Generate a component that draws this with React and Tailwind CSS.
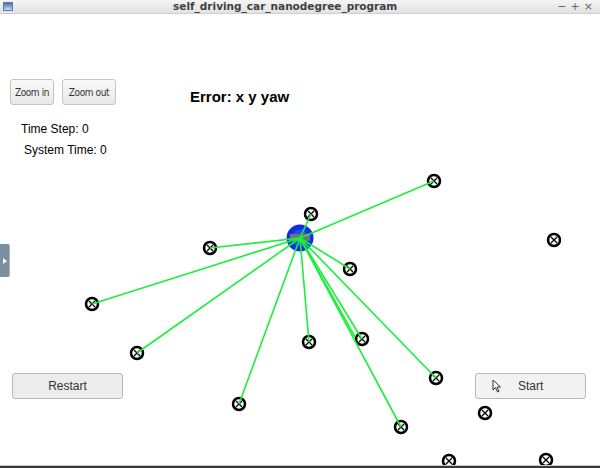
import React from 'react'

const CAR = { x: 300, y: 238 }

// landmark positions, and whether the car currently sees them
const LANDMARKS = [
  [434, 181, true], [311, 214, true], [210, 248, true], [350, 269, true],
  [554, 240, false], [92, 304, true], [137, 353, true], [309, 342, true],
  [362, 339, true], [436, 378, true], [239, 404, true], [401, 427, true],
  [485, 413, false], [449, 461, false], [546, 460, false],
]

function Landmark({ x, y }) {
  return (
    <g>
      <circle cx={x} cy={y} r={6} fill="white" stroke="black" strokeWidth={2.5} />
      <path d={`M${x - 3} ${y - 3}L${x + 3} ${y + 3}M${x + 3} ${y - 3}L${x - 3} ${y + 3}`} stroke="black" strokeWidth={1.3} />
    </g>
  )
}

function Scene() {
  return (
    <svg className="absolute inset-0" width="600" height="454" viewBox="0 14 600 454">
      {LANDMARKS.map(([x, y], i) => <Landmark key={i} x={x} y={y} />)}
      <circle cx={CAR.x} cy={CAR.y} r={13.5} fill="#0d2fe6" />
      <circle cx={CAR.x} cy={CAR.y} r={8.5} fill="#1f4cf0" />
      <rect x={290} y={234} width={20} height={7} fill="#6f747c" />
      {LANDMARKS.filter(l => l[2]).map(([x, y], i) => (
        <line key={i} x1={CAR.x} y1={CAR.y} x2={x} y2={y} stroke="#1bef3a" strokeWidth={1.6} />
      ))}
      <line x1={CAR.x} y1={CAR.y} x2={355} y2={337} stroke="#1bef3a" strokeWidth={1.6} />
    </svg>
  )
}

export default function App() {
  return (
    <div className="w-[600px] h-[468px] bg-white overflow-hidden flex flex-col" style={{ fontFamily: '"Liberation Sans", Arial, sans-serif' }}>
      <div className="h-[14px] flex items-center justify-between px-[3px] bg-gradient-to-b from-[#f4f4f4] to-[#e2e2e2] border-b border-[#d0d0d0] text-[#3a3a3a]" style={{ fontFamily: '"DejaVu Sans", sans-serif' }}>
        <div className="w-[10px] h-[9px] border border-[#5a7aa8] bg-gradient-to-b from-[#3f6db3] to-[#cfdcef]" />
        <span className="text-[10.5px] leading-none font-bold text-[#404040]">self_driving_car_nanodegree_program</span>
        <span className="text-[11px] leading-none tracking-[4px] text-[#666]">−+×</span>
      </div>
      <div className="relative flex-1">
        <Scene />
        <div className="relative flex flex-col">
          <div className="flex items-start mt-[65px]">
            <div className="flex gap-2 ml-[10px]">
              <button className="w-[44px] h-[26px] bg-gradient-to-b from-[#fafafa] to-[#e8e8e8] border border-[#c4c4c4] rounded-[3px] text-[10px] text-[#333] tracking-[-0.4px]" style={{ fontFamily: '"DejaVu Sans Condensed", sans-serif' }}>Zoom in</button>
              <button className="w-[54px] h-[26px] bg-gradient-to-b from-[#fafafa] to-[#e8e8e8] border border-[#c4c4c4] rounded-[3px] text-[10px] text-[#333] tracking-[-0.4px]" style={{ fontFamily: '"DejaVu Sans Condensed", sans-serif' }}>Zoom out</button>
            </div>
            <div className="ml-[74px] mt-[7px] text-[15px] font-bold text-black">Error: x y yaw</div>
          </div>
          <div className="ml-[21px] mt-[14px] text-[12px] text-black leading-none">Time Step: 0</div>
          <div className="ml-[24px] mt-[9px] text-[12px] text-black leading-none">System Time: 0</div>
        </div>
        <div className="absolute left-0 top-[230px] w-[10px] h-[33px] bg-[#7d8fa3] rounded-r-[2px] border-r border-[#aab6c4] flex items-center justify-center">
          <div className="w-0 h-0 border-y-[3px] border-y-transparent border-l-[4px] border-l-white" />
        </div>
        <div className="absolute left-[12px] right-[14px] top-[359px] flex justify-between">
          <button className="w-[111px] h-[26px] bg-[#ececec] border border-[#b8b8b8] rounded-[3px] text-[12px] text-[#333]">Restart</button>
          <button className="w-[111px] h-[26px] bg-[#f2f2f2] border border-[#b8b8b8] rounded-[3px] text-[12px] text-[#333] flex items-center">
            <svg className="ml-[16px]" width="10" height="14" viewBox="0 0 10 14">
              <path d="M1 1L1 11L3.5 8.5L5.5 13L7 12.3L5 8L8.5 8Z" fill="white" stroke="#333" strokeWidth="1" />
            </svg>
            <span className="ml-[16px]">Start</span>
          </button>
        </div>
        <div className="absolute left-0 right-0 bottom-0 h-[3px] bg-[#3a3a3a] border-t border-[#c8c8c8]" />
      </div>
    </div>
  )
}
